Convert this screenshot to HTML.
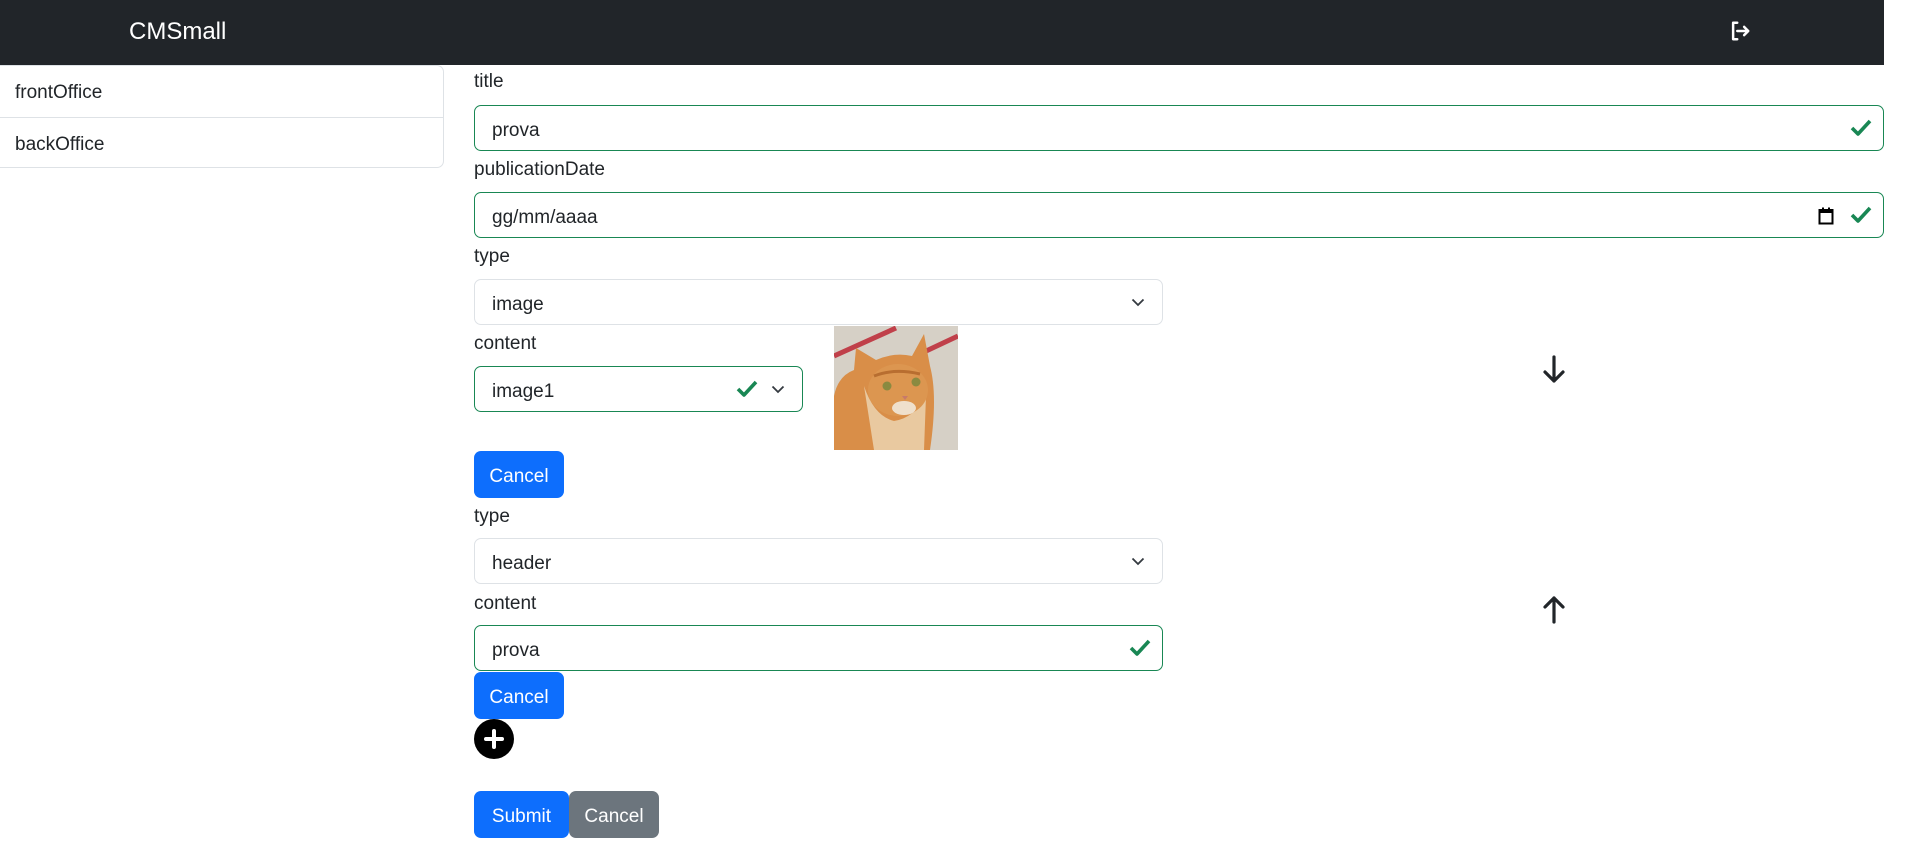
<!DOCTYPE html>
<html><head><meta charset="utf-8">
<style>
*{box-sizing:border-box;margin:0;padding:0}
body{width:1913px;height:863px;background:#fff;font-family:"Liberation Sans",sans-serif;font-size:19px;color:#212529;position:relative;overflow:hidden}
.a{position:absolute}
.nav{left:0;top:0;width:1884px;height:65px;background:#212529}
.brand{left:129px;top:18px;color:#fff;font-size:24px}
.lg{left:0;top:65px;width:444px;height:103px;border:1px solid #dee2e6;border-left:none;border-radius:0 7px 7px 0}
.lg div{height:51px;line-height:54px;padding-left:15px}
.lg div+div{border-top:1px solid #dee2e6}
.lbl{left:474px}
.inp{left:474px;height:46px;border:1px solid #dee2e6;border-radius:7px;line-height:50px;padding-left:17px}
.ok{border-color:#198754}
.btn{height:47px;border-radius:7px;color:#fff;line-height:51px;text-align:center;font-size:19px}
.pri{background:#0d6efd}
.sec{background:#6c757d}
</style></head><body>
<div class="a nav"></div>
<div class="a brand">CMSmall</div>
<svg class="a" style="left:1729px;top:20px" width="22" height="22" viewBox="0 0 16 16" fill="none" stroke="#fff" stroke-width="1.8" stroke-linecap="round" stroke-linejoin="round"><path d="M6 2H3v12h3"/><path d="M6 8h8M11 5l3 3-3 3"/></svg>

<div class="a lg"><div>frontOffice</div><div>backOffice</div></div>

<div class="a lbl" style="top:71px">title</div>
<div class="a inp ok" style="top:105px;width:1410px">prova</div>
<svg class="a" style="left:1850px;top:118px" width="22" height="20" viewBox="0 0 22 20"><path d="M2 10l6 6L20 3" stroke="#198754" stroke-width="3.6" fill="none" stroke-linejoin="round"/></svg>

<div class="a lbl" style="top:159px">publicationDate</div>
<div class="a inp ok" style="top:192px;width:1410px">gg/mm/aaaa</div>
<svg class="a" style="left:1818px;top:207px" width="16" height="18" viewBox="0 0 16 18"><rect x="1.5" y="3" width="13" height="13.5" fill="none" stroke="#000" stroke-width="2"/><rect x="1.5" y="3" width="13" height="3" fill="#000"/><rect x="4" y="0.5" width="2" height="3" fill="#000"/><rect x="10" y="0.5" width="2" height="3" fill="#000"/></svg>
<svg class="a" style="left:1850px;top:205px" width="22" height="20" viewBox="0 0 22 20"><path d="M2 10l6 6L20 3" stroke="#198754" stroke-width="3.6" fill="none" stroke-linejoin="round"/></svg>

<div class="a lbl" style="top:246px">type</div>
<div class="a inp" style="top:279px;width:689px">image</div>
<svg class="a" style="left:1131px;top:297px" width="14" height="10" viewBox="0 0 14 10"><path d="M1.5 2.5l5.5 5.5 5.5-5.5" stroke="#343a40" stroke-width="1.8" fill="none"/></svg>

<div class="a lbl" style="top:333px">content</div>
<div class="a inp ok" style="top:366px;width:329px">image1</div>
<svg class="a" style="left:736px;top:379px" width="22" height="20" viewBox="0 0 22 20"><path d="M2 10l6 6L20 3" stroke="#198754" stroke-width="3.6" fill="none" stroke-linejoin="round"/></svg>
<svg class="a" style="left:771px;top:384px" width="14" height="10" viewBox="0 0 14 10"><path d="M1.5 2.5l5.5 5.5 5.5-5.5" stroke="#343a40" stroke-width="1.8" fill="none"/></svg>

<svg class="a" style="left:834px;top:326px" width="124" height="124" viewBox="0 0 124 124">
<rect width="124" height="124" fill="#d6d0c6"/>
<path d="M0 30L62 2" stroke="#c0404a" stroke-width="5"/>
<path d="M90 26L124 10" stroke="#c0404a" stroke-width="5"/>
<path d="M0 124V70Q4 50 20 44L22 22 42 34Q60 26 78 30L90 8 96 40Q104 70 96 124Z" fill="#d98e48"/>
<path d="M30 60Q40 90 60 95Q80 92 92 70L90 124H40Z" fill="#e9c9a0"/>
<ellipse cx="64" cy="64" rx="30" ry="26" fill="#dc9650"/>
<path d="M40 50Q60 42 86 48" stroke="#b86e30" stroke-width="3" fill="none"/>
<circle cx="53" cy="60" r="4.5" fill="#8a8a40"/><circle cx="82" cy="56" r="4.5" fill="#8a8a40"/>
<path d="M68 70l6 0-3 4z" fill="#c77a6a"/>
<ellipse cx="70" cy="82" rx="12" ry="7" fill="#efe0cc"/>
</svg>

<svg class="a" style="left:1543px;top:355px" width="22" height="28" viewBox="0 0 22 28"><path d="M11 2v24M2 17l9 9 9-9" stroke="#212529" stroke-width="3.2" fill="none" stroke-linecap="round" stroke-linejoin="round"/></svg>

<div class="a btn pri" style="left:474px;top:451px;width:90px">Cancel</div>

<div class="a lbl" style="top:506px">type</div>
<div class="a inp" style="top:538px;width:689px">header</div>
<svg class="a" style="left:1131px;top:556px" width="14" height="10" viewBox="0 0 14 10"><path d="M1.5 2.5l5.5 5.5 5.5-5.5" stroke="#343a40" stroke-width="1.8" fill="none"/></svg>

<div class="a lbl" style="top:593px">content</div>
<div class="a inp ok" style="top:625px;width:689px">prova</div>
<svg class="a" style="left:1129px;top:638px" width="22" height="20" viewBox="0 0 22 20"><path d="M2 10l6 6L20 3" stroke="#198754" stroke-width="3.6" fill="none" stroke-linejoin="round"/></svg>

<svg class="a" style="left:1543px;top:596px" width="22" height="28" viewBox="0 0 22 28"><path d="M11 26V2M2 11l9-9 9 9" stroke="#212529" stroke-width="3.2" fill="none" stroke-linecap="round" stroke-linejoin="round"/></svg>

<div class="a btn pri" style="left:474px;top:672px;width:90px">Cancel</div>
<svg class="a" style="left:474px;top:719px" width="40" height="40" viewBox="0 0 40 40"><circle cx="20" cy="20" r="20" fill="#000"/><path d="M20 12v16M12 20h16" stroke="#fff" stroke-width="4" stroke-linecap="round"/></svg>

<div class="a btn pri" style="left:474px;top:791px;width:95px">Submit</div>
<div class="a btn sec" style="left:569px;top:791px;width:90px">Cancel</div>
</body></html>
